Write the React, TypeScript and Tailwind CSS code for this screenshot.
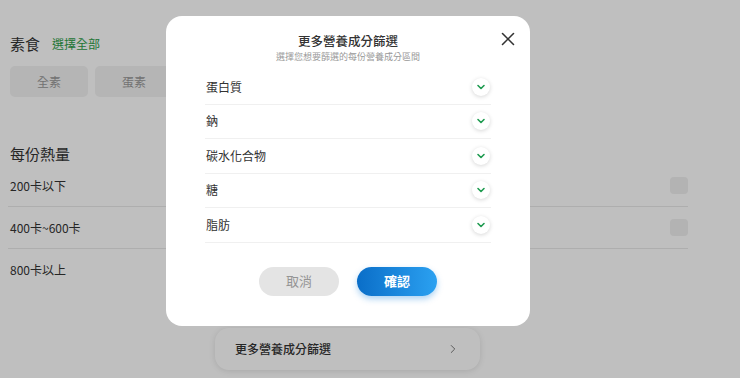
import { X, ChevronRight } from 'lucide-react';

const calorieOptions = [
  { label: '200卡以下', checkbox: true },
  { label: '400卡~600卡', checkbox: true },
  { label: '800卡以上', checkbox: false },
];

const nutrients = ['蛋白質', '鈉', '碳水化合物', '糖', '脂肪'];

function GreenChevron() {
  return (
    <span className="flex h-[18px] w-[18px] items-center justify-center rounded-full bg-white shadow-[0_1px_4px_rgba(0,0,0,0.16)]">
      <svg width="10" height="10" viewBox="0 0 10 10" fill="none">
        <polyline points="2,3.5 5,6.5 8,3.5" stroke="#1f9b50" strokeWidth="1.6" strokeLinecap="round" strokeLinejoin="round" />
      </svg>
    </span>
  );
}

function NutrientModal() {
  return (
    <div className="relative w-[364px] rounded-[16px] bg-white px-[39px] pt-[16px] pb-[30px]">
      <button className="absolute right-[11px] top-[12px] text-[#333]">
        <X className="h-[22px] w-[22px]" strokeWidth={1.7} />
      </button>
      <h2 className="text-center text-[12.5px] leading-[18px] font-medium text-[#333]">更多營養成分篩選</h2>
      <p className="mt-[1px] text-center text-[9px] leading-[12px] text-[#999]">選擇您想要篩選的每份營養成分區間</p>

      <ul className="mt-[7px]">
        {nutrients.map((name) => (
          <li
            key={name}
            className="flex h-[34.5px] items-center justify-between border-b border-[#f0f0f0] pl-[1px] pr-[1px]"
          >
            <span className="text-[12px] text-[#333]">{name}</span>
            <GreenChevron />
          </li>
        ))}
      </ul>

      <div className="mt-[24px] flex justify-center gap-[18px]">
        <button className="h-[29px] w-[80px] rounded-full bg-[#e4e4e4] text-[13px] text-[#949494]">取消</button>
        <button className="h-[29px] w-[80px] rounded-full bg-gradient-to-r from-[#0a6ec8] to-[#2ba1f1] text-[13px] font-bold text-white shadow-[0_3px_6px_rgba(20,130,220,0.35)]">
          確認
        </button>
      </div>
    </div>
  );
}

export default function App() {
  return (
    <div className="relative h-[378px] w-[740px] overflow-hidden bg-white font-['Noto_Sans_CJK_TC','Noto_Sans',sans-serif]">
      {/* page underneath */}
      <div className="pt-[33px]">
        <div className="flex h-[22px] items-center pl-[10px]">
          <span className="text-[15px] text-[#333]">素食</span>
          <span className="ml-[12px] text-[12px] text-[#2f9e4a]">選擇全部</span>
        </div>
        <div className="mt-[11px] flex gap-[7px] pl-[10px]">
          <div className="flex h-[31px] w-[78px] items-center justify-center rounded-[5px] bg-[#f2f2f2] text-[12px] text-[#999]">全素</div>
          <div className="flex h-[31px] w-[78px] items-center justify-center rounded-[5px] bg-[#f2f2f2] text-[12px] text-[#999]">蛋素</div>
        </div>

        <h3 className="mt-[46px] pl-[10px] text-[15px] leading-[22px] text-[#333]">每份熱量</h3>
        <div className="ml-[8px] w-[680px]">
          {calorieOptions.map((opt, i) => (
            <div
              key={opt.label}
              className={`flex h-[42px] items-center justify-between pl-[2px] ${i < 2 ? 'border-b border-[#e8e8e8]' : ''}`}
            >
              <span className="text-[12px] text-[#333]">{opt.label}</span>
              {opt.checkbox && <span className="h-[17px] w-[18px] rounded-[4px] bg-[#efefef]" />}
            </div>
          ))}
        </div>

        <div className="ml-[215px] mt-[37px] flex h-[42px] w-[265px] items-center justify-between rounded-[14px] bg-white pl-[20px] pr-[20px] shadow-[0_1px_6px_rgba(0,0,0,0.12)]">
          <span className="text-[12px] font-medium text-[#333]">更多營養成分篩選</span>
          <ChevronRight className="h-[14px] w-[14px] text-[#666]" strokeWidth={1.5} />
        </div>
      </div>

      {/* overlay */}
      <div className="fixed inset-0 flex items-start bg-black/25 pl-[166px] pt-[16px]">
        <NutrientModal />
      </div>
    </div>
  );
}
